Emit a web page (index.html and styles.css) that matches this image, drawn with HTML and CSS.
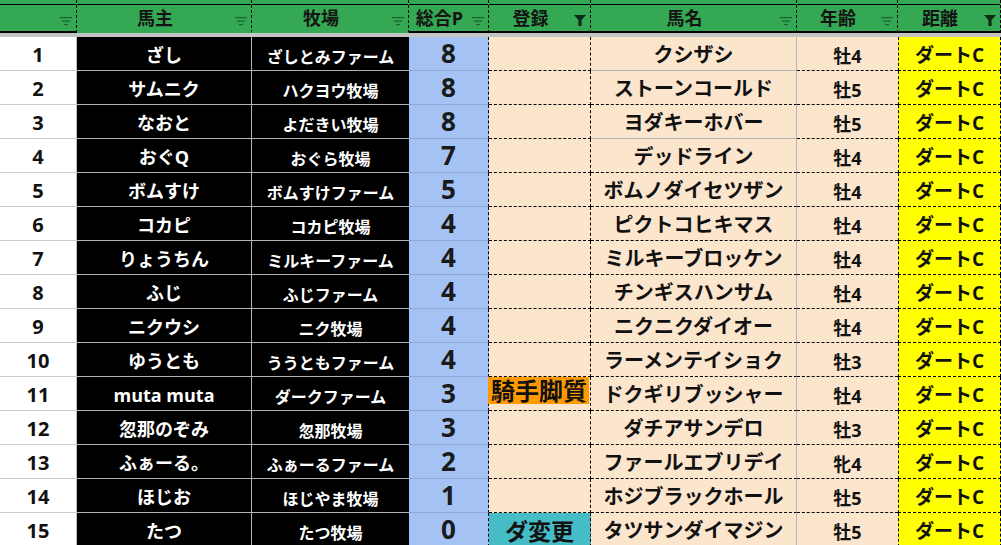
FILE: index.html
```html
<!DOCTYPE html>
<html lang="ja">
<head>
<meta charset="utf-8">
<title>馬主一覧</title>
<link rel="stylesheet" href="styles.css">
</head>
<body>
<div class="sheet">
  <div class="hd"><span class="t"></span><svg viewBox="0 0 12 9"><rect x="0" y="0" width="12" height="1.2"/><rect x="2" y="3.5" width="8" height="1.2"/><rect x="4" y="7" width="4" height="1.2"/></svg></div>
  <div class="hd nob"><span class="t">馬主</span><svg viewBox="0 0 12 9"><rect x="0" y="0" width="12" height="1.2"/><rect x="2" y="3.5" width="8" height="1.2"/><rect x="4" y="7" width="4" height="1.2"/></svg></div>
  <div class="hd nob"><span class="t">牧場</span><svg viewBox="0 0 12 9"><rect x="0" y="0" width="12" height="1.2"/><rect x="2" y="3.5" width="8" height="1.2"/><rect x="4" y="7" width="4" height="1.2"/></svg></div>
  <div class="hd"><span class="t">総合P</span><svg viewBox="0 0 12 9"><rect x="0" y="0" width="12" height="1.2"/><rect x="2" y="3.5" width="8" height="1.2"/><rect x="4" y="7" width="4" height="1.2"/></svg></div>
  <div class="hd"><span class="t">登録</span><svg class="on" viewBox="0 0 12 11"><path d="M0 0H12L7.6 5V11H4.4V5Z"/></svg></div>
  <div class="hd"><span class="t">馬名</span><svg viewBox="0 0 12 9"><rect x="0" y="0" width="12" height="1.2"/><rect x="2" y="3.5" width="8" height="1.2"/><rect x="4" y="7" width="4" height="1.2"/></svg></div>
  <div class="hd"><span class="t">年齢</span><svg viewBox="0 0 12 9"><rect x="0" y="0" width="12" height="1.2"/><rect x="2" y="3.5" width="8" height="1.2"/><rect x="4" y="7" width="4" height="1.2"/></svg></div>
  <div class="hd"><span class="t">距離</span><svg class="on" viewBox="0 0 12 11"><path d="M0 0H12L7.6 5V11H4.4V5Z"/></svg></div>
  <div class="band"></div>

  <div class="c n">1</div><div class="c o">ざし</div><div class="c f">ざしとみファーム</div><div class="c p">8</div><div class="c r"></div><div class="c h g">クシザシ</div><div class="c a">牡4</div><div class="c d">ダートC</div>
  <div class="c n">2</div><div class="c o">サムニク</div><div class="c f">ハクヨウ牧場</div><div class="c p">8</div><div class="c r"></div><div class="c h">ストーンコールド</div><div class="c a">牡5</div><div class="c d">ダートC</div>
  <div class="c n">3</div><div class="c o">なおと</div><div class="c f">よだきい牧場</div><div class="c p">8</div><div class="c r"></div><div class="c h g">ヨダキーホバー</div><div class="c a">牡5</div><div class="c d">ダートC</div>
  <div class="c n">4</div><div class="c o">おぐQ</div><div class="c f">おぐら牧場</div><div class="c p">7</div><div class="c r"></div><div class="c h">デッドライン</div><div class="c a">牡4</div><div class="c d">ダートC</div>
  <div class="c n">5</div><div class="c o">ボムすけ</div><div class="c f">ボムすけファーム</div><div class="c p">5</div><div class="c r"></div><div class="c h">ボムノダイセツザン</div><div class="c a">牡4</div><div class="c d">ダートC</div>
  <div class="c n">6</div><div class="c o">コカピ</div><div class="c f">コカピ牧場</div><div class="c p">4</div><div class="c r"></div><div class="c h">ピクトコヒキマス</div><div class="c a">牡4</div><div class="c d">ダートC</div>
  <div class="c n">7</div><div class="c o">りょうちん</div><div class="c f">ミルキーファーム</div><div class="c p">4</div><div class="c r"></div><div class="c h">ミルキーブロッケン</div><div class="c a">牡4</div><div class="c d">ダートC</div>
  <div class="c n">8</div><div class="c o">ふじ</div><div class="c f">ふじファーム</div><div class="c p">4</div><div class="c r"></div><div class="c h">チンギスハンサム</div><div class="c a">牡4</div><div class="c d">ダートC</div>
  <div class="c n">9</div><div class="c o">ニクウシ</div><div class="c f">ニク牧場</div><div class="c p">4</div><div class="c r"></div><div class="c h">ニクニクダイオー</div><div class="c a">牡4</div><div class="c d">ダートC</div>
  <div class="c n">10</div><div class="c o">ゆうとも</div><div class="c f">ううともファーム</div><div class="c p">4</div><div class="c r"></div><div class="c h">ラーメンテイショク</div><div class="c a">牡3</div><div class="c d">ダートC</div>
  <div class="c n">11</div><div class="c o">muta muta</div><div class="c f">ダークファーム</div><div class="c p">3</div><div class="c r left"><span class="tag">騎手脚質</span></div><div class="c h">ドクギリブッシャー</div><div class="c a">牡4</div><div class="c d">ダートC</div>
  <div class="c n">12</div><div class="c o">忽那のぞみ</div><div class="c f">忽那牧場</div><div class="c p">3</div><div class="c r"></div><div class="c h">ダチアサンデロ</div><div class="c a">牡3</div><div class="c d">ダートC</div>
  <div class="c n">13</div><div class="c o">ふぁーる。</div><div class="c f">ふぁーるファーム</div><div class="c p">2</div><div class="c r"></div><div class="c h">ファールエブリデイ</div><div class="c a">牝4</div><div class="c d">ダートC</div>
  <div class="c n">14</div><div class="c o">ほじお</div><div class="c f">ほじやま牧場</div><div class="c p">1</div><div class="c r"></div><div class="c h">ホジブラックホール</div><div class="c a">牡5</div><div class="c d">ダートC</div>
  <div class="c n">15</div><div class="c o">たつ</div><div class="c f">たつ牧場</div><div class="c p">0</div><div class="c r teal">ダ変更</div><div class="c h">タツサンダイマジン</div><div class="c a">牡5</div><div class="c d">ダートC</div>
</div>
</body>
</html>
```

FILE: styles.css
```css
* { box-sizing: border-box; margin: 0; padding: 0; }
html, body {
  width: 1001px;
  height: 545px;
  overflow: hidden;
  background: #fff;
}
body {
  font-family: "Open Sans", "Noto Sans CJK JP", "Noto Sans", sans-serif;
  font-weight: 700;
  color: #111;
}
.sheet {
  display: grid;
  grid-template-columns: 77px 175px 157px 80px 102px 206px 101px 103px;
}
.hd {
  height: 33px;
  display: flex;
  align-items: center;
  padding-top: 5px;
  background: linear-gradient(#000, #000) 0 4px / 100% 1px no-repeat, #34a853;
  border-right: 1px dashed #000;
  border-bottom: 2px solid #000;
  font-size: 18px;
  color: #141414;
}
.hd.nob { border-bottom-color: transparent; }
.hd .t {
  flex: 1;
  text-align: center;
  line-height: 1;
  padding-left: 2px;
}
.hd svg {
  flex: none;
  width: 12px;
  height: 9px;
  margin: 7px 4px 0 4px;
  fill: #1f5e31;
}
.hd svg.on {
  height: 11px;
  margin-top: 5px;
  fill: #0f2a17;
}
.band {
  grid-column: 1 / -1;
  height: 4px;
  background: #c4c4c4;
}
.c {
  height: 34px;
  display: flex;
  align-items: center;
  justify-content: center;
  line-height: 1;
  white-space: nowrap;
  border-bottom: 1px solid #ccc;
}
.n {
  background: #fff;
  border-right: 1px solid #c0c0c0;
  font-size: 20px;
  color: #111;
  padding-top: 3px;
}
.o {
  background: #000;
  color: #fff;
  font-size: 18px;
  padding-top: 3px;
  border-right: 1px solid #b4b4b4;
  border-bottom-color: #b4b4b4;
}
.f {
  background: #000;
  color: #fff;
  font-size: 16px;
  padding-top: 6px;
  border-bottom-color: #b4b4b4;
}
.p {
  background: #a4c2f4;
  font-size: 26px;
  color: #1a1a1a;
  padding-bottom: 2px;
  border-right: 1px dashed #000;
  border-bottom-color: #8ea6d4;
}
.r {
  background: #fce5cd;
  font-size: 23px;
  border-right: 1px dashed #000;
  border-bottom: 1px dashed #000;
}
.r.left {
  justify-content: flex-start;
  align-items: flex-start;
}
.tag {
  display: block;
  background: #ff9900;
  height: 27px;
  font-size: 24px;
  padding: 2px 2px 0 3px;
  margin-left: -1px;
}
.r.teal {
  background: #46bdc6;
  padding-top: 3px;
}
.h {
  background: #fce5cd;
  font-size: 20px;
  padding-top: 3px;
  border-right: 1px solid #b4b4b4;
  border-bottom: 1px dashed #000;
}
.h.g { border-bottom: 1px solid #b4b4b4; }
.a {
  background: #fce5cd;
  font-size: 18px;
  padding-top: 5px;
  border-bottom: 1px dashed #000;
}
.d {
  background: #ffff00;
  font-size: 19px;
  padding-top: 4px;
  border-left: 1px dashed #000;
  border-right: 1px dashed #000;
  border-bottom: 1px dashed #000;
}
```
